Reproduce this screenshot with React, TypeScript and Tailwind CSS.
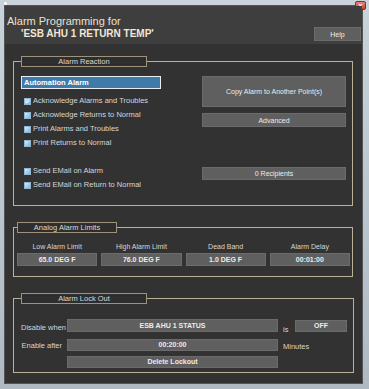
import type { ReactNode } from "react";

const font = { fontFamily: '"Liberation Sans", Arial, sans-serif' };

function Box({ children, className = "" }: { children: ReactNode; className?: string }) {
  return (
    <div
      className={`flex items-center justify-center bg-[#5f5f5f] border border-[#6b6b6b] text-[#ececec] text-[7px] leading-none whitespace-nowrap ${className}`}
    >
      {children}
    </div>
  );
}

function Check({ label, checked = false }: { label: string; checked?: boolean }) {
  return (
    <div className="flex items-center h-[14px] pl-[3px] gap-[2px]">
      <span className="w-[7px] h-[7px] flex items-center justify-center border border-[#8fb7d6] bg-gradient-to-br from-[#d9eaf6] to-[#86b4d6]">
        {checked && (
          <svg width="7" height="7" viewBox="0 0 7 7">
            <path d="M1 3.6 L2.8 5.4 L6 1.2" stroke="#ffffff" strokeWidth="1.3" fill="none" />
          </svg>
        )}
      </span>
      <span className="text-[7.5px] leading-none text-[#d6d6d6] whitespace-nowrap">{label}</span>
    </div>
  );
}

function Group({
  title,
  legendWidth,
  className = "",
  children,
}: {
  title: string;
  legendWidth: string;
  className?: string;
  children: ReactNode;
}) {
  return (
    <fieldset className={`ml-[8px] w-[340px] border border-[#bcb196] ${className}`}>
      <legend
        className={`${legendWidth} h-[11px] flex items-center justify-center border border-[#9d937c] bg-[#2e2e2e] text-[7.5px] leading-none text-[#d8d8d8]`}
      >
        {title}
      </legend>
      {children}
    </fieldset>
  );
}

const limits = [
  { label: "Low Alarm Limit", value: "65.0 DEG F" },
  { label: "High Alarm Limit", value: "76.0 DEG F" },
  { label: "Dead Band", value: "1.0 DEG F" },
  { label: "Alarm Delay", value: "00:01:00" },
];

export default function App() {
  return (
    <div
      style={font}
      className="relative w-[369px] h-[389px] bg-gradient-to-b from-[#c9d3da] to-[#aeb9c2] pt-[5px] pl-[4px] pr-[6px] pb-[5px]"
    >
      {/* window chrome */}
      <span className="absolute left-[4px] top-[2px] w-[3px] h-[3px] bg-white rounded-full" />
      <span className="absolute right-[3px] top-[1px] w-[11px] h-[9px] rounded-[2px] bg-gradient-to-b from-[#e48a7c] to-[#c23a2a] border border-[#8a2a20] flex items-center justify-center text-white text-[7px] leading-none font-bold">
        x
      </span>

      <div className="w-full h-full bg-[#323232] border border-[#555] flex flex-col">
        {/* header */}
        <div className="h-[38px] bg-[#3e3e3e] relative flex">
          <div className="pl-[2px] pt-[9px] flex flex-col">
            <span className="text-[11px] leading-[12px] text-[#ebe2cf]">Alarm Programming for</span>
            <span className="pl-[14px] text-[10px] leading-[13px] font-bold text-[#f1e7d2]">
              'ESB AHU 1 RETURN TEMP'
            </span>
          </div>
          <div className="ml-auto mr-[1px] mt-[21px]">
            <Box className="w-[47px] h-[14px] text-[7.5px] bg-[#5a5a5a]">Help</Box>
          </div>
        </div>

        {/* Alarm Reaction */}
        <Group title="Alarm Reaction" legendWidth="w-[126px]" className="mt-[12px] pl-[7px] pr-[6px] pt-[9px] pb-[13px]">
          <div className="flex justify-between">
            <div className="flex flex-col w-[140px]">
              <div className="h-[13px] bg-[#3f7aa8] border border-[#e6eef4] flex items-center pl-[2px] text-white font-bold text-[7.5px] leading-none">
                Automation Alarm
              </div>
              <div className="mt-[5px] flex flex-col">
                <Check label="Acknowledge Alarms and Troubles" checked />
                <Check label="Acknowledge Returns to Normal" />
                <Check label="Print Alarms and Troubles" />
                <Check label="Print Returns to Normal" />
              </div>
              <div className="mt-[14px] flex flex-col">
                <Check label="Send EMail on Alarm" />
                <Check label="Send EMail on Return to Normal" />
              </div>
            </div>
            <div className="flex flex-col w-[144px]">
              <Box className="h-[31px]">Copy Alarm to Another Point(s)</Box>
              <Box className="h-[14px] mt-[6px]">Advanced</Box>
              <Box className="h-[13px] mt-[40px]">0 Recipients</Box>
            </div>
          </div>
        </Group>

        {/* Analog Alarm Limits */}
        <Group title="Analog Alarm Limits" legendWidth="w-[100px]" className="mt-[16px] pl-[3px] pr-[2px] pt-[9px] pb-[10px]">
          <div className="grid grid-cols-4 gap-x-[4px]">
            {limits.map((l) => (
              <div key={l.label} className="flex flex-col items-center">
                <span className="h-[11px] text-[7px] leading-[10px] text-[#d6d6d6]">{l.label}</span>
                <Box className="w-full h-[13px] font-bold">{l.value}</Box>
              </div>
            ))}
          </div>
        </Group>

        {/* Alarm Lock Out */}
        <Group title="Alarm Lock Out" legendWidth="w-[126px]" className="mt-[16px] pl-[7px] pr-[6px] pt-[14px] pb-[4px]">
          <div className="flex flex-col gap-[5px] text-[7.5px] leading-none text-[#d6d6d6]">
            <div className="flex items-center">
              <span className="w-[41px] text-right pt-[3px] whitespace-nowrap">Disable when</span>
              <Box className="ml-[5px] w-[211px] h-[13px] font-bold">ESB AHU 1 STATUS</Box>
              <span className="ml-[5px] w-[12px] pt-[8px]">is</span>
              <Box className="w-[52px] h-[12px] font-bold">OFF</Box>
            </div>
            <div className="flex items-center">
              <span className="w-[41px] text-right pt-[3px] whitespace-nowrap">Enable after</span>
              <Box className="ml-[5px] w-[211px] h-[12px] font-bold">00:20:00</Box>
              <span className="ml-[5px] pt-[4px]">Minutes</span>
            </div>
            <div className="flex items-center">
              <Box className="ml-[46px] w-[211px] h-[12px] font-bold">Delete Lockout</Box>
            </div>
          </div>
        </Group>
      </div>
    </div>
  );
}
